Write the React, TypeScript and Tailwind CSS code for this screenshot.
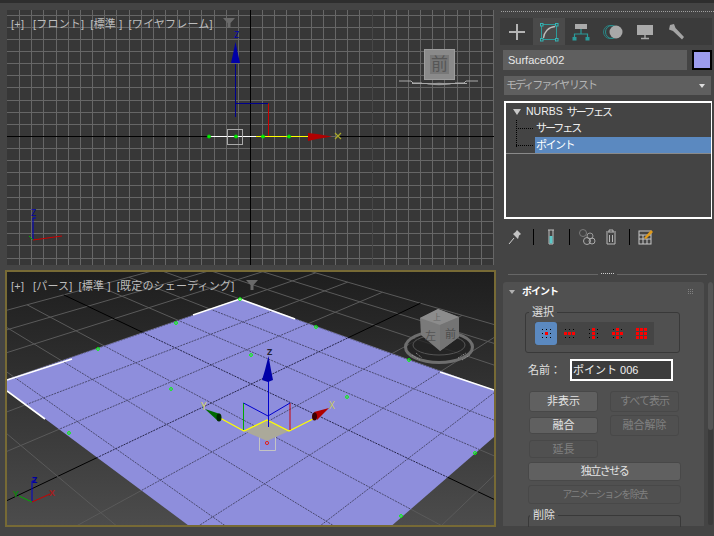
import React from "react";

const JP = "font-['Liberation_Sans','Noto_Sans_CJK_JP',sans-serif]";

type P = [number, number];

// maps ground coords (0..1) onto the screen using the plane's four corners
const solveHomography = (t: P, r: P, b: P, l: P) => {
  const [x0, y0] = t;
  const [x1, y1] = r;
  const [x2, y2] = b;
  const [x3, y3] = l;
  const dx1 = x1 - x2;
  const dx2 = x3 - x2;
  const sx = x0 - x1 + x2 - x3;
  const dy1 = y1 - y2;
  const dy2 = y3 - y2;
  const sy = y0 - y1 + y2 - y3;
  const den = dx1 * dy2 - dx2 * dy1;
  const g = (sx * dy2 - dx2 * sy) / den;
  const h = (dx1 * sy - sx * dy1) / den;
  const a = x1 - x0 + g * x1;
  const bb = x3 - x0 + h * x3;
  const d = y1 - y0 + g * y1;
  const e = y3 - y0 + h * y3;
  return {
    g,
    h,
    map: (u: number, v: number): P => {
      const w = g * u + h * v + 1;
      return [(a * u + bb * v + x0) / w, (d * u + e * v + y0) / w];
    },
  };
};

const T: P = [240, 27];
const R: P = [532, 132];
const B: P = [298, 335];
const L: P = [-3, 111];
const { g: gu, h: gv, map: ground } = solveHomography(T, R, B, L);

// finds the parameter on a plane edge where the screen x reaches a target
const findOnEdge = (fn: (k: number) => number, target: number) => {
  let lo = 0;
  let hi = 1;
  for (let i = 0; i < 30; i++) {
    const mid = (lo + hi) / 2;
    if ((fn(mid) - target) * (fn(1) - target) > 0) hi = mid;
    else lo = mid;
  }
  return lo;
};

const u0 = findOnEdge((k) => ground(k, 0)[0], 348);
const v0 = findOnEdge((k) => ground(0, k)[0], 143);

const groundLines = () => {
  const out: { a: P; b: P; major: boolean }[] = [];
  const du = u0 / 3;
  const dv = v0 / 3;
  for (let i = -3; i <= 30; i++) {
    const u = i * du;
    const vEnd = (-0.9 - gu * u) / gv;
    if (vEnd > -3 * dv) out.push({ a: ground(u, -3 * dv), b: ground(u, vEnd), major: i === 3 });
    const v = i * dv;
    const uEnd = (-0.9 - gv * v) / gu;
    if (uEnd > -3 * du) out.push({ a: ground(-3 * du, v), b: ground(uEnd, v), major: i === 3 });
  }
  return out;
};

const FrontGrid = () => {
  const xs: number[] = [];
  const ys: number[] = [];
  for (let i = -19; i <= 20; i++) xs.push(Math.round(250 + i * 12.15) + 0.5);
  for (let i = -10; i <= 10; i++) ys.push(Math.round(136 + i * 12.15) + 0.5);
  return (
    <svg width="487" height="255" viewBox="7 10 487 255" className="block">
      {ys.map((y) => (
        <line key={y} x1="7" x2="494" y1={y} y2={y} stroke="#666" strokeWidth="1" />
      ))}
      {xs.map((x) => (
        <line
          key={x}
          x1={x}
          x2={x}
          y1="10"
          y2="265"
          stroke={x === 128.5 || x === 372.5 ? "#474747" : "#666"}
          strokeWidth="1"
        />
      ))}
      <line x1="250.5" x2="250.5" y1="10" y2="265" stroke="#000" />
      <line x1="7" x2="209" y1="136.5" y2="136.5" stroke="#000" />
      <line x1="338" x2="494" y1="136.5" y2="136.5" stroke="#000" />
      <line x1="209" x2="256" y1="136.5" y2="136.5" stroke="#fff" />
      <line x1="256" x2="310" y1="136.5" y2="136.5" stroke="#ff0" />
      <path d="M235.5 64V117" stroke="#00008c" />
      <path d="M235.5 103.5H268" stroke="#00008c" />
      <path d="M268.5 103.5V136" stroke="#c00" />
      <path d="M235.5 42L238 54L240 63H231L233 54Z" fill="#0000a8" />
      <path d="M308 133L317 134L332 136.5L317 139L308 141Z" fill="#b00000" />
      <text x="234" y="38" fontSize="9" fill="#00a">Z</text>
      <path d="M335 133L341 139M341 133L335 139" stroke="#a9a92a" strokeWidth="1.2" />
      <rect x="227.5" y="129.5" width="15" height="15" fill="none" stroke="#aaa" />
      {[209, 236, 263, 289].map((x) => (
        <circle key={x} cx={x} cy="136.5" r="1.6" fill="#0f0" stroke="#0d0" strokeWidth="0.8" />
      ))}
      {/* ビューキューブ */}
      <rect x="424.5" y="49.5" width="30" height="30" fill="#8a8a8a" stroke="#9c9c9c" />
      <rect x="430" y="55" width="19" height="19" fill="#777" />
      <text x="439.5" y="70" fontSize="17" textAnchor="middle" fill="#565656" fontFamily="Noto Sans CJK JP">
        前
      </text>
      <path d="M399 81H411M411 81L413 83H422M478 81H466M466 81L464 83H455M412 83.5H467" stroke="#aaa" fill="none" />
      <ellipse cx="439" cy="84" rx="12" ry="1.2" fill="#999" />
      {/* ミニ軸 */}
      <path d="M33 240V218H36" stroke="#00c" fill="none" />
      <path d="M33 240L62 236" stroke="#c00" />
      <path d="M33 240L29 236" stroke="#0a0" />
      <text x="31" y="216" fontSize="9" fill="#00a">Z</text>
    </svg>
  );
};

const PerspScene = () => {
  const poly = [T, R, B, L].map((p) => p.join(",")).join(" ");
  const lines = groundLines();
  return (
    <svg width="487" height="253" viewBox="7 0 487 253" className="absolute left-0 top-0">
      <clipPath id="planeClip">
        <polygon points={poly} />
      </clipPath>
      {lines.map((g, i) => (
        <line
          key={i}
          x1={g.a[0]}
          y1={g.a[1]}
          x2={g.b[0]}
          y2={g.b[1]}
          stroke={g.major ? "#000" : "#5a5a5a"}
          strokeWidth="1"
        />
      ))}
      <polygon points={poly} fill="#8e8edc" />
      <g clipPath="url(#planeClip)">
        {lines.map((g, i) => (
          <line
            key={i}
            x1={g.a[0]}
            y1={g.a[1]}
            x2={g.b[0]}
            y2={g.b[1]}
            stroke={g.major ? "#26264a" : "#4a4a70"}
            strokeWidth="1"
            strokeDasharray="2 1"
          />
        ))}
      </g>
      {/* 白いエッジ */}
      <path
        d="M7 108L72 87M193 43L240 27L295 47M440 100L494 118M7 119L45 147"
        stroke="#fff"
        strokeWidth="1.6"
        fill="none"
      />
      {[
        [98, 77],
        [176, 51],
        [240, 27],
        [316, 55],
        [171, 117],
        [69, 161],
        [251, 83],
        [347, 125],
        [475, 181],
        [401, 244],
        [409, 88],
      ].map(([x, y]) => (
        <circle key={`${x}-${y}`} cx={x} cy={y} r="1.4" fill="none" stroke="#0f0" />
      ))}
      {/* ギズモ */}
      <path d="M259.5 165V178.5H275.5V165" fill="none" stroke="#c4c4c4" />
      <path d="M244 159L267 148L289 159L267 169Z" fill="#aba99a" />
      <circle cx="267" cy="171" r="1.6" fill="none" stroke="#e02020" />
      <path d="M220 146L244 159L267 148L289 159L313 147" stroke="#ff0" fill="none" strokeWidth="1.2" />
      <path d="M243.5 131V158" stroke="#0a0" />
      <path d="M290 131V158" stroke="#c00" />
      <path d="M243.5 131L268 144L290 131" stroke="#00c" fill="none" />
      <path d="M268.5 109V155" stroke="#00c" />
      <path d="M268.5 84L271 98L273 108L268 110L262 108L265 98Z" fill="#0000a8" />
      <text x="267" y="83" fontSize="9" fontWeight="bold" fill="#223">Z</text>
      <path d="M205 137L220 142L218 149Z" fill="#006a00" />
      <ellipse cx="219" cy="145.5" rx="2.5" ry="4" fill="#002a00" />
      <text x="201" y="138" fontSize="10" fill="#d4d46a">Y</text>
      <path d="M329 136L314 140L317 148Z" fill="#b00000" />
      <ellipse cx="314.5" cy="144.5" rx="2.5" ry="4" fill="#3a0000" />
      <text x="329" y="137" fontSize="10" fill="#c8c860">X</text>
      {/* ビューキューブ */}
      <ellipse cx="439" cy="75" rx="31" ry="14" fill="#222" opacity="0.75" />
      <ellipse cx="439" cy="75" rx="33.5" ry="15.5" fill="none" stroke="#6e6e6e" strokeWidth="3" />
      <ellipse cx="439" cy="73" rx="26" ry="10" fill="none" stroke="#555" strokeWidth="1" />
      <path d="M420 46L438 37L459 45L459 65L440 79L421 63Z" fill="#7a7a7a" />
      <path d="M420 46L438 37L459 45L440 53Z" fill="#8c8c8c" />
      <path d="M440 53L459 45L459 65L440 79Z" fill="#747474" />
      <text x="433" y="48" fontSize="8" fill="#666" fontFamily="Noto Sans CJK JP">上</text>
      <text x="425" y="68" fontSize="11" fill="#555" fontFamily="Noto Sans CJK JP">左</text>
      <text x="445" y="66" fontSize="11" fill="#4e4e4e" fontFamily="Noto Sans CJK JP">前</text>
      <path d="M412 83L420 88M416 81L422 86M462 88L470 83M458 86L466 81" stroke="#999" strokeDasharray="1 1" />
      {/* ミニ軸 */}
      <path d="M32 230V209H36" stroke="#00c" fill="none" />
      <path d="M32 230L50 222" stroke="#c00" />
      <path d="M32 230L19 224" stroke="#0a0" />
      <text x="32" y="211" fontSize="9" fontWeight="bold" fill="#0000a0">Z</text>
      <text x="49" y="224" fontSize="9" fontWeight="bold" fill="#a02020">X</text>
      <text x="13" y="225" fontSize="9" fontWeight="bold" fill="#108010">Y</text>
    </svg>
  );
};

const ViewLabel = ({ parts }: { parts: string[] }) => (
  <div
    className={`absolute left-1 top-[6px] flex items-center gap-[6px] text-[11px] leading-4 tracking-[0.2px] text-[#bdbdbd] whitespace-nowrap ${JP}`}
  >
    {parts.map((p) => (
      <span key={p} className="min-w-[16px]">
        {p}
      </span>
    ))}
  </div>
);

const Funnel = ({ left }: { left: string }) => (
  <svg width="12" height="12" viewBox="0 0 12 12" className={`absolute top-[7px] ${left}`}>
    <path d="M0 1H12L7.5 6V11H4.5V6Z" fill="#6a6a6a" />
  </svg>
);

const TabIcon = ({ children, active }: { children: React.ReactNode; active?: boolean }) => (
  <div className={`flex h-[27px] w-[32px] items-center justify-center ${active ? "bg-[#4a4a4a]" : ""}`}>
    <svg width="22" height="22" viewBox="0 0 22 22">
      {children}
    </svg>
  </div>
);

const PointDots = ({ on }: { on: number[] }) => {
  const cells = [0, 1, 2, 3, 4, 5, 6, 7, 8];
  return (
    <div className="grid w-[11px] grid-cols-3 gap-px">
      {cells.map((c) => (
        <div key={c} className="flex h-[3px] items-center justify-center">
          {on.includes(c) ? <div className="h-[3px] w-[3px] bg-[#f00]" /> : <div className="h-px w-px bg-black" />}
        </div>
      ))}
    </div>
  );
};

const Btn = ({ label, disabled, className }: { label: string; disabled?: boolean; className: string }) => (
  <div
    className={`flex items-center justify-center rounded-[3px] border ${JP} ${
      disabled ? "border-[#484848] bg-[#505050] text-[#808080]" : "border-[#484848] bg-[#606060] text-[#e4e4e4]"
    } ${className}`}
  >
    {label}
  </div>
);

const TabBar = () => (
  <div className="ml-[3px] flex h-[27px] w-[212px] items-center bg-[#3b3b3b] pl-[1px]">
    <TabIcon>
      <path d="M11 3V19M3 11H19" stroke="#b4b4b4" strokeWidth="2" />
    </TabIcon>
    <TabIcon active>
      <rect x="3.5" y="3.5" width="15" height="15" fill="none" stroke="#2c9c9c" />
      <path d="M5.5 17C6 11 10.5 6 17 5.5" fill="none" stroke="#bbb" strokeWidth="1.4" />
      {[
        [2, 2],
        [17, 2],
        [2, 17],
        [17, 17],
      ].map(([x, y]) => (
        <rect key={`${x}${y}`} x={x + 0.5} y={y + 0.5} width="2.5" height="2.5" fill="#4a4a4a" stroke="#34b4b4" />
      ))}
    </TabIcon>
    <TabIcon>
      <rect x="5" y="3" width="12" height="5" fill="#aaa" />
      <path d="M11 8V13M4.5 17V13H17.5V17" fill="none" stroke="#2a9a9a" strokeWidth="1.2" />
      <rect x="2.5" y="16" width="4" height="3.5" fill="#2a9a9a" />
      <rect x="15.5" y="16" width="4" height="3.5" fill="#2a9a9a" />
    </TabIcon>
    <TabIcon>
      <circle cx="8" cy="11" r="6.5" fill="none" stroke="#2a8080" strokeWidth="1" />
      <circle cx="10" cy="11" r="6.5" fill="none" stroke="#2a9090" strokeWidth="1" />
      <circle cx="14" cy="11" r="6.5" fill="#a8a8a8" />
    </TabIcon>
    <TabIcon>
      <rect x="3" y="4" width="16" height="10" fill="#aaa" />
      <path d="M11 14V17M7 17.5H15" stroke="#aaa" strokeWidth="1.4" />
    </TabIcon>
    <TabIcon>
      <path d="M4 4L8 3L9.5 7L18 16L16 18.5L7 10L3 8.5Z" fill="#a4a4a4" />
    </TabIcon>
  </div>
);

const StackToolbar = () => (
  <div className="mt-[8px] flex h-5 items-center pl-[11px]">
    <svg width="14" height="16" viewBox="0 0 14 16">
      <path d="M1 15L6 9" stroke="#d0d0d0" />
      <path d="M5 5L10 10L11 6.5L13 5L9 1L7.5 3Z" fill="#c4c4c4" />
    </svg>
    <div className="ml-[11px] mr-[12px] h-4 w-px bg-black" />
    <svg width="10" height="16" viewBox="0 0 10 16">
      <path d="M2 1H8M3 1V15H7V1" stroke="#c0c0c0" fill="none" />
      <rect x="3.5" y="7" width="3" height="7.5" fill="#5cc8c8" />
    </svg>
    <div className="ml-[13px] mr-[8px] h-4 w-px bg-black" />
    <svg width="18" height="16" viewBox="0 0 18 16">
      <circle cx="5" cy="4" r="3.5" fill="none" stroke="#7a7a7a" />
      <circle cx="12" cy="7" r="3" fill="none" stroke="#999" />
      <circle cx="9" cy="12" r="3.5" fill="none" stroke="#aaa" />
      <circle cx="14" cy="12" r="3" fill="none" stroke="#aaa" />
    </svg>
    <svg width="12" height="16" viewBox="0 0 12 16" className="ml-[9px]">
      <path d="M1 3H11M4 3V1H8V3M2 4V15H10V4M4.5 6V13M7.5 6V13" stroke="#b8b8b8" fill="none" />
    </svg>
    <div className="ml-[12px] mr-[8px] h-4 w-px bg-black" />
    <svg width="16" height="16" viewBox="0 0 16 16">
      <rect x="1" y="2" width="12" height="13" fill="none" stroke="#c8c8c8" />
      <path d="M1 6H13M1 10H13M5 6V15M9 10V15" stroke="#c8c8c8" />
      <path d="M6 9L13 1L15 3L8 10Z" fill="#e09a1a" />
    </svg>
  </div>
);

const Rollout = () => (
  <div className="relative ml-[6px] mt-[7px] h-[244px] w-[201px] rounded-t-[3px] bg-[#505050]">
    <div className="flex h-[18px] items-center pl-[6px] pt-px">
      <div className="h-0 w-0 border-x-[3px] border-t-[4px] border-x-transparent border-t-[#b0b0b0]" />
      <span className={`ml-[7px] text-[10px] font-bold tracking-[-1px] text-white ${JP}`}>ポイント</span>
      <div className="ml-auto mr-[11px] grid grid-cols-3 gap-px">
        {[0, 1, 2, 3, 4, 5, 6, 7, 8].map((d) => (
          <div key={d} className="h-px w-px bg-[#808080]" />
        ))}
      </div>
    </div>
    {/* 選択 */}
    <div className="relative ml-[22px] mt-[12px] h-[41px] w-[155px] rounded-[3px] border border-[#393939]">
      <span className={`absolute -top-[9px] left-[3px] bg-[#505050] px-[3px] text-[11px] leading-4 text-[#e0e0e0] ${JP}`}>
        選択
      </span>
      <div className="ml-[9px] mt-[9px] flex h-[23px] w-[119px] items-center bg-[#454545]">
        <div className="flex h-[23px] w-[22px] items-center justify-center rounded-[3px] bg-[#5b89c0]">
          <PointDots on={[4]} />
        </div>
        <div className="flex w-[24px] justify-center">
          <PointDots on={[3, 4, 5]} />
        </div>
        <div className="flex w-[24px] justify-center">
          <PointDots on={[1, 4, 7]} />
        </div>
        <div className="flex w-[24px] justify-center">
          <PointDots on={[1, 3, 4, 5, 7]} />
        </div>
        <div className="flex w-[24px] justify-center">
          <PointDots on={[0, 1, 2, 3, 4, 5, 6, 7, 8]} />
        </div>
      </div>
    </div>
    {/* 名前 */}
    <div className="ml-[25px] mt-[6px] flex h-[22px] items-center">
      <span className={`w-[42px] text-[11px] text-[#e0e0e0] ${JP}`}>名前：</span>
      <div className={`flex h-[22px] w-[103px] items-center border-2 border-white bg-[#3c3c3c] pl-[1px] text-[11px] text-[#eee] ${JP}`}>
        ポイント 006
      </div>
    </div>
    <div className="ml-[26px] mt-[10px] grid w-[150px] grid-cols-[69px_69px] gap-x-[12px]">
      <Btn label="非表示" className="h-[21px] text-[11px]" />
      <Btn label="すべて表示" disabled className="h-[21px] text-[11px] tracking-[-1px]" />
      <Btn label="融合" className="mt-[5px] h-[17px] text-[11px]" />
      <Btn label="融合解除" disabled className="mt-[3px] h-[21px] text-[11px]" />
      <Btn label="延長" disabled className="mt-[4px] h-[18px] text-[11px]" />
    </div>
    <div className="ml-[25px] mt-[4px] flex w-[153px] flex-col gap-[4px]">
      <Btn label="独立させる" className="h-[19px] text-[11px] tracking-[-1.5px]" />
      <Btn label="アニメーションを除去" disabled className="h-[19px] text-[10px] tracking-[-1.5px]" />
    </div>
    {/* 削除 */}
    <div className="relative ml-[25px] mt-[11px] h-[12px] w-[153px] rounded-t-[3px] border border-b-0 border-[#393939]">
      <span className={`absolute -top-[9px] left-[1px] bg-[#505050] px-[3px] text-[11px] leading-4 text-[#e0e0e0] ${JP}`}>
        削除
      </span>
    </div>
  </div>
);

export default function App() {
  return (
    <div className="flex h-[536px] w-[714px] overflow-hidden bg-[#444444]">
      {/* ビューポート */}
      <div className="flex h-full w-[497px] flex-col">
        <div className="h-[3px] bg-[#2e2e2e]" />
        <div className="relative ml-[7px] mt-[7px] h-[255px] w-[487px] bg-[#373737]">
          <FrontGrid />
          <ViewLabel parts={["[+]", "[フロント]", "[標準 ]", "[ワイヤフレーム]"]} />
          <Funnel left="left-[216px]" />
        </div>
        <div className="relative ml-[5px] mt-[5px] h-[257px] w-[491px] border-2 border-[#776a35] bg-gradient-to-b from-[#1e1e1e] to-[#4c4c4c]">
          <div className="absolute inset-0 overflow-hidden">
            <PerspScene />
          </div>
          <ViewLabel parts={["[+]", "[パース]", "[標準 ]", "[既定のシェーディング]"]} />
          <Funnel left="left-[239px]" />
        </div>
      </div>

      {/* コマンドパネル */}
      <div className="flex h-full flex-1 flex-col">
        <div className="h-[3px] bg-[#2e2e2e]" />
        <div className="mt-[8px] ml-[4px] h-[2px] border-t border-dotted border-[#a0a0a0]" />
        <div className="mt-[5px]">
          <TabBar />
        </div>
        <div className="ml-[6px] mt-[5px] flex w-[209px] items-center gap-[5px]">
          <div className="flex h-5 w-[184px] items-center bg-[#5f5f5f] pl-[5px] text-[11px] text-[#e8e8e8] font-['Liberation_Sans',sans-serif]">
            Surface002
          </div>
          <div className="h-5 w-5 border-2 border-black bg-[#9c9cee]" />
        </div>
        <div className={`ml-[7px] mt-[6px] flex h-[19px] w-[207px] items-center justify-between bg-[#5f5f5f] pl-[2px] pr-[6px] text-[11px] text-[#b4b4b4] ${JP}`}>
          <span className="tracking-[-2px]">モディファイヤ リスト</span>
          <div className="h-0 w-0 border-x-[3px] border-t-[4px] border-x-transparent border-t-[#ddd]" />
        </div>
        <div className={`ml-[7px] mt-[6px] h-[118px] w-[208px] border-2 border-r border-white bg-[#444] text-[11px] text-[#eee] ${JP}`}>
          <div className="flex h-[17px] items-center pl-[7px] pt-[1px]">
            <div className="h-0 w-0 border-x-[4px] border-t-[6px] border-x-transparent border-t-[#c8c8c8]" />
            <span className="ml-[5px] text-[10.5px]">NURBS</span>
            <span className="ml-[4px] tracking-[-2px]">サーフェス</span>
          </div>
          <div className="relative ml-[10px]">
            <div className="absolute left-0 top-0 h-[27px] border-l border-dotted border-black" />
            <div className="absolute left-0 top-[8px] w-[17px] border-t border-dotted border-black" />
            <div className="absolute left-0 top-[25px] w-[17px] border-t border-dotted border-black" />
            <div className="ml-[20px] flex h-[17px] items-center tracking-[-2px]">サーフェス</div>
            <div className="ml-[19px] flex h-[16px] items-center bg-[#5b89c0] pl-[1px] tracking-[-1.5px] text-white">ポイント</div>
            <div className="ml-[-10px] h-px bg-[#8a8a8a]" />
          </div>
        </div>
        <StackToolbar />
        <div className="ml-[11px] mt-[26px] flex w-[199px] items-center">
          <div className="h-px w-[90px] bg-[#666]" />
          <div className="mx-[3px] h-[2px] w-[13px] border-t border-dotted border-[#ccc]" />
          <div className="h-px flex-1 bg-[#666]" />
        </div>
        <div className="relative">
          <Rollout />
          <div className="absolute left-[211px] top-[7px] h-[243px] w-[5px] rounded-sm bg-[#3a3a3a]">
            <div className="h-[148px] rounded-sm bg-[#555]" />
          </div>
        </div>
      </div>
    </div>
  );
}
